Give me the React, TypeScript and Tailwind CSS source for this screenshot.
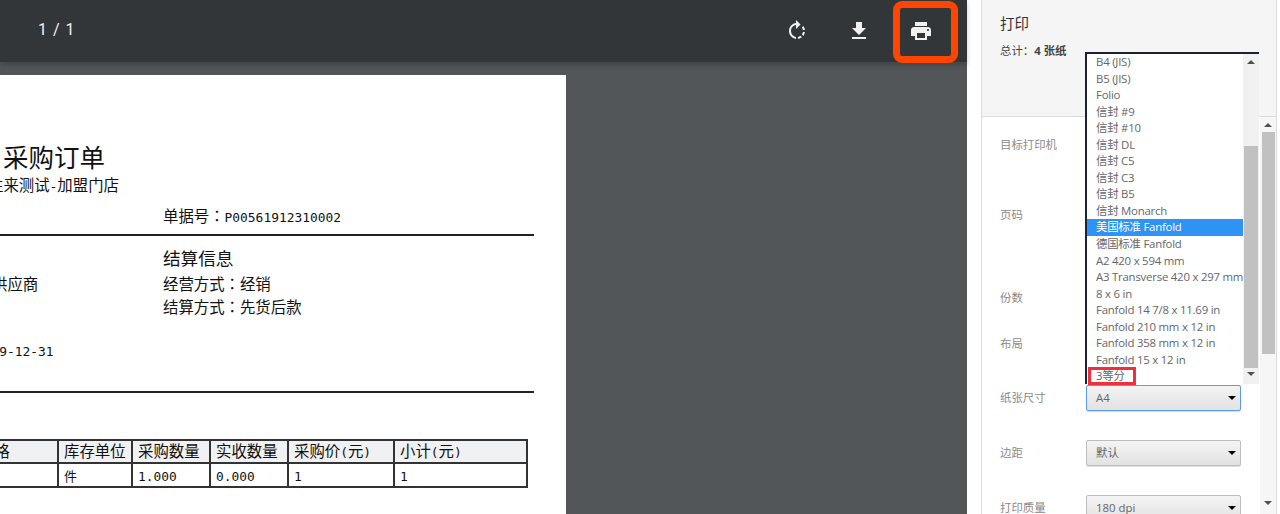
import type { ReactNode } from "react";

const paperSizes = [
  "B4 (JIS)",
  "B5 (JIS)",
  "Folio",
  "信封 #9",
  "信封 #10",
  "信封 DL",
  "信封 C5",
  "信封 C3",
  "信封 B5",
  "信封 Monarch",
  "美国标准 Fanfold",
  "德国标准 Fanfold",
  "A2 420 x 594 mm",
  "A3 Transverse 420 x 297 mm",
  "8 x 6 in",
  "Fanfold 14 7/8 x 11.69 in",
  "Fanfold 210 mm x 12 in",
  "Fanfold 358 mm x 12 in",
  "Fanfold 15 x 12 in",
  "3等分",
];

const docFont = "font-['DejaVu_Sans_Mono','Noto_Sans_CJK_JP',monospace]";
const uiFont = "font-['Open_Sans','Noto_Sans_CJK_SC',sans-serif]";

function Icon({ d }: { d: string }) {
  return (
    <svg viewBox="0 0 24 24" className="w-6 h-6 fill-[#f1f1f1]">
      <path d={d} />
    </svg>
  );
}

function Toolbar() {
  return (
    <div className="h-[62px] shrink-0 bg-[#323639] flex items-center shadow-[0_3px_5px_rgba(0,0,0,0.2)] relative z-10">
      <div className="ml-[38px] -mt-[2px] text-[16px] tracking-[1px] text-[#f1f1f1] font-['Roboto',sans-serif]">1 / 1</div>
      <div className="ml-auto mr-[34px] flex items-center gap-[38px]">
        <Icon d="M15.55 5.55L11 1v3.07C7.06 4.56 4 7.92 4 12s3.05 7.44 7 7.93v-2.02c-2.84-.48-5-2.94-5-5.91s2.16-5.43 5-5.91V10l4.55-4.45zM19.93 11c-.17-1.39-.72-2.73-1.62-3.89l-1.42 1.42c.54.75.88 1.6 1.02 2.47h2.02zM13 17.9v2.02c1.39-.17 2.74-.71 3.9-1.61l-1.44-1.44c-.75.54-1.59.89-2.46 1.03zm3.89-2.42l1.42 1.41c.9-1.16 1.45-2.5 1.62-3.89h-2.02c-.14.87-.48 1.72-1.02 2.48z" />
        <Icon d="M19 9h-4V3H9v6H5l7 7 7-7zM5 18v2h14v-2H5z" />
        <Icon d="M19 8H5c-1.66 0-3 1.34-3 3v6h4v4h12v-4h4v-6c0-1.66-1.34-3-3-3zm-3 11H8v-5h8v5zm3-7c-.55 0-1-.45-1-1s.45-1 1-1 1 .45 1 1-.45 1-1 1zm-1-9H6v4h12V3z" />
      </div>
      <div className="absolute left-[893px] top-[1px] w-[65px] h-[62px] border-[7px] border-[#ff4500] rounded-[9px]" />
    </div>
  );
}

function Mono({ children }: { children: ReactNode }) {
  return <span className="text-[12.9px]">{children}</span>;
}

const cols: { w: string; head: ReactNode; val: string }[] = [
  { w: "w-[83px]", head: "规格", val: "" },
  { w: "w-[74px]", head: "库存单位", val: "件" },
  { w: "w-[78px]", head: "采购数量", val: "1.000" },
  { w: "w-[78px]", head: "实收数量", val: "0.000" },
  { w: "w-[106px]", head: <>采购价<Mono>(</Mono>元<Mono>)</Mono></>, val: "1" },
  { w: "w-[133px]", head: <>小计<Mono>(</Mono>元<Mono>)</Mono></>, val: "1" },
];

function Paper() {
  return (
    <div className={`mt-[13px] w-[566px] h-[500px] bg-white overflow-hidden text-[15.4px] leading-[20px] text-[#111] ${docFont}`}>
      <div className="-ml-[24px] w-[558px]">
        <div className="pt-[68px] pl-[27px] text-[25.5px] leading-[30px]">采购订单</div>
        <div className="mt-[3px] pl-[12px] whitespace-nowrap">往来测试<Mono>-</Mono>加盟门店</div>
        <div className="mt-[10px] pl-[187px]">
          单据号：<Mono>P00561912310002</Mono>
        </div>
        <div className="mt-[6px] h-[2px] bg-[#222]" />
        <div className="mt-[12px] pl-[187px] text-[17.6px] leading-[22px]">结算信息</div>
        <div className="mt-[5px] flex">
          <div className="w-[187px] pl-[16px]">供应商</div>
          <div>
            经营方式：经销
            <div className="mt-[3px]">结算方式：先货后款</div>
          </div>
        </div>
        <div className="mt-[23px]">
          <Mono>2019-12-31</Mono>
        </div>
        <div className="mt-[29px] h-[2px] bg-[#222]" />
        <div className="mt-[46px] -ml-[4px] flex border-2 border-[#333] w-[556px]">
          {cols.map((c, i) => (
            <div key={i} className={`${c.w} shrink-0 ${i > 0 ? "border-l-2 border-[#333]" : ""} ${i === cols.length - 1 ? "flex-1" : ""}`}>
              <div className="h-[23px] bg-[#f0f1f3] border-b-2 border-[#333] px-[5px] leading-[23px] whitespace-nowrap">{c.head}</div>
              <div className="h-[22px] px-[5px] leading-[25px]">
                <Mono>{c.val}</Mono>
              </div>
            </div>
          ))}
        </div>
      </div>
    </div>
  );
}

function Caret({ up, className }: { up?: boolean; className?: string }) {
  return (
    <div
      className={`w-0 h-0 border-l-[4px] border-r-[4px] border-l-transparent border-r-transparent ${
        up ? "border-b-[4px] border-b-[#505050]" : "border-t-[4px] border-t-[#505050]"
      } ${className ?? ""}`}
    />
  );
}

function Field({ label, value, mt, focused }: { label: string; value?: string; mt: string; focused?: boolean }) {
  return (
    <div className={`${mt} h-[26px] flex items-center`}>
      <div className="w-[86px] text-[#8a8a8a]">{label}</div>
      {value && (
        <div
          className={`w-[155px] h-[26px] flex items-center pl-[9px] pr-[4px] rounded-[2px] border text-[#666] bg-gradient-to-b from-[#f4f4f4] to-[#e2e2e2] shadow-[0_1px_0_rgba(0,0,0,0.12)] ${
            focused ? "border-[#5a9bea]" : "border-[#bdbdbd]"
          }`}
        >
          {value}
          <div className="ml-auto w-0 h-0 border-l-[4px] border-r-[4px] border-t-[4px] border-l-transparent border-r-transparent border-t-black" />
        </div>
      )}
    </div>
  );
}

function Dropdown() {
  return (
    <div className={`absolute left-[103px] top-[52px] w-[174px] h-[332px] bg-white border-l-2 border-t-2 border-[#1c2233] flex text-[#666] leading-[16.55px]`}>
      <div className="w-[156px] shrink-0 tracking-[-0.22px]">
        {paperSizes.map((size, i) => (
          <div key={size} className={`pl-[9px] h-[16.55px] whitespace-nowrap ${i === 10 ? "bg-[#2f93f5] text-white" : ""}`}>
            {size}
          </div>
        ))}
      </div>
      <div className="flex-1 bg-[#f1f1f1] flex flex-col items-center">
        <Caret up className="mt-[6px]" />
        <div className="w-[14px] h-[222px] mt-[82px] bg-[#c1c1c1]" />
        <Caret className="mt-[4px]" />
      </div>
      <div className="absolute left-[1px] top-[313px] w-[48px] h-[18px] border-[3px] border-[#ef2f3c]" />
    </div>
  );
}

function PrintPanel() {
  return (
    <div className={`relative ml-[14px] w-[296px] h-full flex flex-col border-l border-r border-[#dcdcdc] text-[11.4px] ${uiFont}`}>
      <div className="h-[117px] shrink-0 bg-[#f5f5f5] border-b border-[#dcdcdc] pl-[18px] pt-[13px]">
        <div className="text-[14.5px] leading-[22px] text-[#333]">打印</div>
        <div className="mt-[7px] text-[#444]">
          总计：<b>4 张纸</b>
        </div>
      </div>
      <div className="flex-1 min-h-0 flex overflow-hidden bg-white">
        <div className="flex-1 pl-[18px]">
          <Field label="目标打印机" mt="mt-[15px]" />
          <Field label="页码" mt="mt-[44px]" />
          <Field label="份数" mt="mt-[57px]" />
          <Field label="布局" mt="mt-[20px]" />
          <Field label="纸张尺寸" value="A4" mt="mt-[28px]" focused />
          <Field label="边距" value="默认" mt="mt-[29px]" />
          <Field label="打印质量" value="180 dpi" mt="mt-[29px]" />
        </div>
        <div className="w-[16px] shrink-0 bg-[#f6f6f6] flex flex-col items-center">
          <Caret up className="mt-[6px]" />
          <div className="w-[13px] h-[222px] mt-[5px] bg-[#c1c1c1]" />
          <Caret className="mt-[147px]" />
        </div>
      </div>
      <Dropdown />
    </div>
  );
}

export default function App() {
  return (
    <div className="w-[1280px] h-[514px] overflow-hidden bg-white flex">
      <div className="w-[967px] h-full bg-[#525659] flex flex-col shrink-0">
        <Toolbar />
        <Paper />
      </div>
      <PrintPanel />
    </div>
  );
}
